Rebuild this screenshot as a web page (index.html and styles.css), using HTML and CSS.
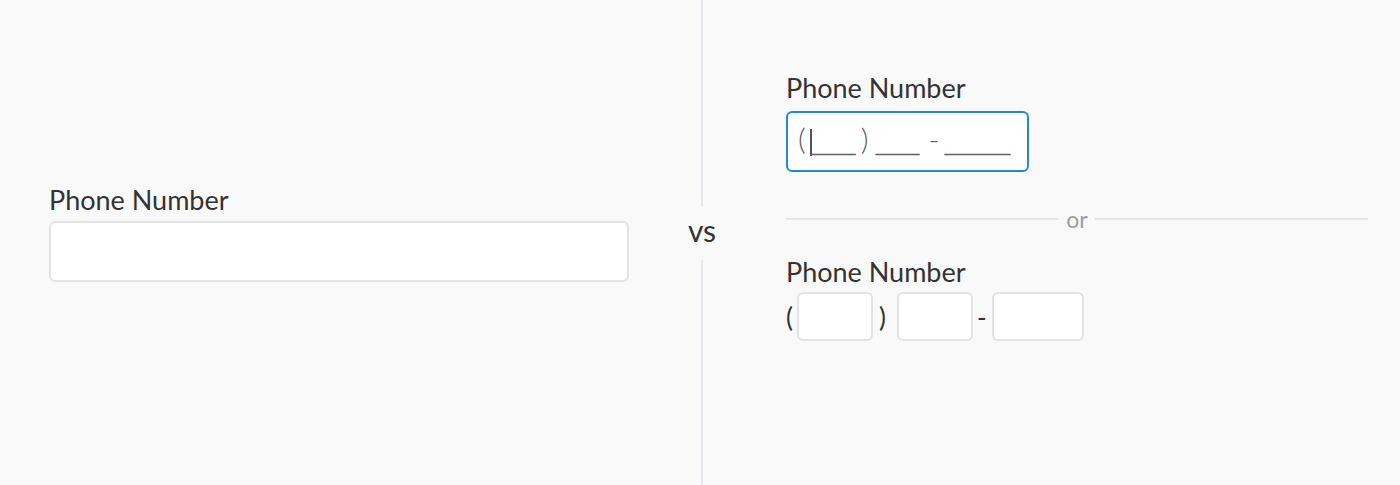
FILE: index.html
```html
<!DOCTYPE html>
<html lang="en">
<head>
    <title>Phone Number</title>
    <link rel="stylesheet" href="styles.css">
</head>
<body>
    <div class="page">
        <div class="side left">
            <label class="label">Phone Number</label>
            <div class="input wide"></div>
        </div>
        <div class="vs">vs</div>
        <div class="side right">
            <label class="label">Phone Number</label>
            <div class="input masked">
                <span class="mask-sym">(</span>
                <span class="caret"></span>
                <span class="blank">____</span>
                <span class="mask-sym close-p">)</span>
                <span class="blank gap">____</span>
                <span class="mask-sym minus">-</span>
                <span class="blank last-gap">______</span>
            </div>
            <div class="or"><span class="rule"></span><span class="or-text">or</span><span class="rule"></span></div>
            <label class="label second">Phone Number</label>
            <div class="split">
                <span class="sym">(</span>
                <div class="input box area"></div>
                <span class="sym close">)</span>
                <div class="input box"></div>
                <span class="sym dash">-</span>
                <div class="input box last"></div>
            </div>
        </div>
    </div>
</body>
</html>
```

FILE: styles.css
```css
body{
    margin: 0;
    background-color: #f9f9fa;
    font-family: 'Lato', 'Noto Sans', sans-serif;
    color: #333333;
}
.page{
    display: flex;
    height: 485px;
    position: relative;
}
.side{
    display: flex;
    flex-direction: column;
    align-items: flex-start;
}
.left{
    width: 652px;
    padding-left: 49px;
    padding-top: 184px;
    border-right: 2px solid #e7e7ee;
}
.right{
    flex: 1;
    padding-left: 83px;
    padding-right: 32px;
    padding-top: 72px;
}
.label{
    font-size: 27px;
    line-height: 32px;
}
.input{
    background-color: #ffffff;
    border: 2px solid #e3e3e6;
    border-radius: 6px;
    box-sizing: border-box;
}
.wide{
    width: 580px;
    height: 61px;
    margin-top: 5px;
}
.masked{
    width: 243px;
    height: 61px;
    margin-top: 7px;
    border-color: #1f8ad3;
    display: flex;
    align-items: baseline;
    padding-left: 10px;
    padding-top: 10px;
    color: #5e5e5e;
}
.mask-sym{
    font-size: 30px;
    line-height: 30px;
    font-weight: 300;
}
.caret{
    align-self: flex-start;
    width: 2px;
    height: 27px;
    margin-top: 6px;
    margin-left: 4px;
    background-color: #555555;
}
.blank{
    font-family: 'DejaVu Sans', sans-serif;
    font-size: 22px;
    line-height: 22px;
    color: #666666;
}
.close-p{
    margin-left: 5px;
}
.gap{
    margin-left: 7px;
}
.minus{
    margin-left: 9px;
}
.last-gap{
    margin-left: 5px;
}
.or{
    display: flex;
    align-items: center;
    width: 100%;
    margin-top: 35px;
    height: 24px;
}
.rule{
    flex: 1;
    height: 2px;
    background-color: #e6e6ea;
}
.or-text{
    font-size: 23px;
    color: #9d9d9d;
    padding: 0 7px;
    line-height: 24px;
}
.second{
    margin-top: 25px;
}
.split{
    display: flex;
    align-items: center;
    margin-top: 4px;
}
.sym{
    font-size: 26px;
    line-height: 32px;
}
.box{
    width: 76px;
    height: 49px;
}
.area{
    margin-left: 4px;
    width: 76px;
}
.close{
    margin-left: 6px;
    margin-right: 11px;
}
.dash{
    margin-left: 4px;
    margin-right: 5px;
}
.last{
    width: 92px;
}
.vs{
    position: absolute;
    left: 682px;
    top: 206px;
    width: 40px;
    padding: 4px 0 10px;
    text-align: center;
    font-size: 30px;
    line-height: 40px;
    background-color: #f9f9fa;
    color: #333333;
}
```
